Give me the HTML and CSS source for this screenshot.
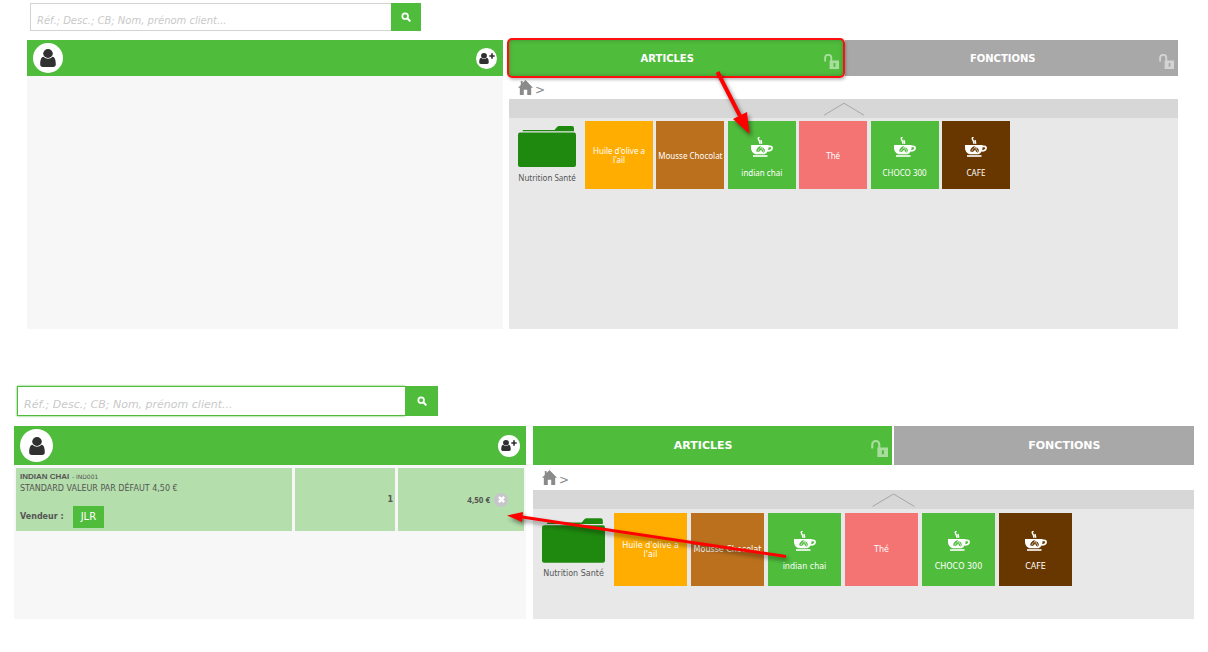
FILE: index.html
```html
<!DOCTYPE html>
<html lang="fr">
<head>
<meta charset="utf-8">
<meta name="viewport" content="width=device-width, initial-scale=1">
<title>Caisse</title>
<link rel="stylesheet" href="styles.css">
</head>
<body>
<svg class="sprite" aria-hidden="true">
  <symbol id="search" viewBox="0 0 12 12"><circle cx="5" cy="5" r="3.4" fill="none" stroke="currentColor" stroke-width="2"/><path d="M7.5 7.5 10.5 10.5" stroke="currentColor" stroke-width="2.4" stroke-linecap="round"/></symbol>
  <symbol id="user" viewBox="0 0 16 18"><ellipse cx="8" cy="4.500" rx="4.800" ry="4.400" fill="currentColor"/><path d="M3.400 7.800C1 8.300.2 11.500.2 15.200c0 1.800 1 2.800 2.600 2.800h10.400c1.600 0 2.600-1 2.600-2.800 0-3.700-.8-6.900-3.200-7.400C10 10.400 6 10.400 3.400 7.800z" fill="currentColor"/></symbol>
  <symbol id="plus" viewBox="0 0 6 6"><path d="M3 .3v5.400M.3 3h5.400" stroke="currentColor" stroke-width="1.600"/></symbol>
  <symbol id="lock" viewBox="0 0 16 16"><path d="M1.200 8V4.200a3.300 3.300 0 0 1 6.600 0V7.500" fill="none" stroke="currentColor" stroke-width="2"/><path fill-rule="evenodd" d="M6 7h10v9H6zM10.200 9.700v3.800h2V9.700z" fill="currentColor"/></symbol>
  <symbol id="home" viewBox="0 0 14 14"><path d="M7 0 14 7.300H12.300V14H8.600V9H5.400v5H1.700V7.300H0L2.600 4.600V1h1.700v1.800z" fill="currentColor"/></symbol>
  <symbol id="chevron" viewBox="0 0 44 14"><path d="M1 13.500 22 1 43 13.500" fill="none" stroke="currentColor" stroke-width="1"/></symbol>
  <symbol id="folder" viewBox="0 0 58 41"><path d="M5 4h31.500L39 1Q40 0 41 0h13q2 0 2 2v3.300H4.500z" fill="currentColor"/><rect y="6.500" width="58" height="34.500" rx="2" fill="currentColor"/></symbol>
  <symbol id="cup" viewBox="0 0 22 20"><path d="M8.500 0c-3.400 2 1.200 3.200.2 6.800M10.300 3c-.8 1.400.8 2 .1 3.800" fill="none" stroke="#fff" stroke-width="1.500"/><path d="M0 8h17.500v3c0 3-1.600 5-4 6.200h-9C1.600 16 0 14 0 11z" fill="#fff"/><path d="M16.500 9.300h2.600q2 0 2 1.700c0 1.700-2 2.800-4.700 3" fill="none" stroke="#fff" stroke-width="1.700"/><path d="M2 19h14.500" stroke="#fff" stroke-width="1.600"/><g fill="var(--tile)"><ellipse cx="8" cy="12.200" rx="3.300" ry="1.900" transform="rotate(-48 8 12.200)"/><ellipse cx="12" cy="13" rx="1.600" ry="2.500" transform="rotate(-28 12 13)"/></g><path d="M6.300 14.500c1-2 2.400-2 3.600-4.500M11 10.800c.3 1.800 1.600 2.200 2 4.200" fill="none" stroke="#fff" stroke-width=".7"/></symbol>
  <symbol id="cross" viewBox="0 0 8 8"><path d="M1 1l6 6M7 1 1 7" stroke="currentColor" stroke-width="2.800"/></symbol>
</svg>

<main class="page">
  <section class="screen first">
    <form class="search">
      <input class="search-input" type="text" aria-label="Recherche" placeholder="Réf.; Desc.; CB; Nom, prénom client...">
      <button class="search-button" type="button" aria-label="Rechercher"><svg><use href="#search"/></svg></button>
    </form>
    <div class="panels">
      <section class="ticket">
        <header class="ticket-head">
          <button class="client" type="button" aria-label="Client"><svg><use href="#user"/></svg></button>
          <button class="add" type="button" aria-label="Ajouter un client"><svg class="person"><use href="#user"/></svg><svg class="plus"><use href="#plus"/></svg></button>
        </header>
      </section>
      <section class="catalog">
        <div class="catalog-inner">
          <nav class="tabs">
            <button class="tab active framed" type="button"><span class="tab-label">ARTICLES</span><svg class="lock"><use href="#lock"/></svg></button>
            <button class="tab" type="button"><span class="tab-label">FONCTIONS</span><svg class="lock"><use href="#lock"/></svg></button>
          </nav>
          <div class="crumbs"><a class="home" href="#" aria-label="Accueil"><svg><use href="#home"/></svg></a><span>&gt;</span></div>
          <button class="scroll-up" type="button" aria-label="Monter"><svg><use href="#chevron"/></svg></button>
          <div class="items">
            <button class="folder" type="button"><svg><use href="#folder"/></svg><span>Nutrition Santé</span></button>
            <div class="tiles">
              <button class="tile orange" type="button">Huile d'olive a l'ail</button>
              <button class="tile caramel" type="button">Mousse Chocolat</button>
              <button class="tile green drink" type="button"><svg><use href="#cup"/></svg><span>indian chai</span></button>
              <button class="tile pink" type="button">Thé</button>
              <button class="tile green drink" type="button"><svg><use href="#cup"/></svg><span>CHOCO 300</span></button>
              <button class="tile brown drink" type="button"><svg><use href="#cup"/></svg><span>CAFE</span></button>
            </div>
          </div>
        </div>
      </section>
    </div>
  </section>

  <section class="screen second">
    <form class="search">
      <input class="search-input" type="text" aria-label="Recherche" placeholder="Réf.; Desc.; CB; Nom, prénom client...">
      <button class="search-button" type="button" aria-label="Rechercher"><svg><use href="#search"/></svg></button>
    </form>
    <div class="panels">
      <section class="ticket">
        <header class="ticket-head">
          <button class="client" type="button" aria-label="Client"><svg><use href="#user"/></svg></button>
          <button class="add" type="button" aria-label="Ajouter un client"><svg class="person"><use href="#user"/></svg><svg class="plus"><use href="#plus"/></svg></button>
        </header>
        <div class="line">
          <div class="cell">
            <div class="product"><b>INDIAN CHAI</b> <small>- IND001</small></div>
            <div class="option">STANDARD VALEUR PAR DÉFAUT 4,50 €</div>
            <div class="seller"><b>Vendeur :</b><button class="seller-name" type="button">JLR</button></div>
          </div>
          <div class="cell quantity">1</div>
          <div class="cell price">4,50 €<button class="remove" type="button" aria-label="Supprimer"><svg><use href="#cross"/></svg></button></div>
        </div>
      </section>
      <section class="catalog">
        <div class="catalog-inner">
          <nav class="tabs">
            <button class="tab active" type="button"><span class="tab-label">ARTICLES</span><svg class="lock"><use href="#lock"/></svg></button>
            <button class="tab" type="button"><span class="tab-label">FONCTIONS</span><svg class="lock"><use href="#lock"/></svg></button>
          </nav>
          <div class="crumbs"><a class="home" href="#" aria-label="Accueil"><svg><use href="#home"/></svg></a><span>&gt;</span></div>
          <button class="scroll-up" type="button" aria-label="Monter"><svg><use href="#chevron"/></svg></button>
          <div class="items">
            <button class="folder" type="button"><svg><use href="#folder"/></svg><span>Nutrition Santé</span></button>
            <div class="tiles">
              <button class="tile orange" type="button">Huile d'olive a l'ail</button>
              <button class="tile caramel" type="button">Mousse Chocolat</button>
              <button class="tile green drink" type="button"><svg><use href="#cup"/></svg><span>indian chai</span></button>
              <button class="tile pink" type="button">Thé</button>
              <button class="tile green drink" type="button"><svg><use href="#cup"/></svg><span>CHOCO 300</span></button>
              <button class="tile brown drink" type="button"><svg><use href="#cup"/></svg><span>CAFE</span></button>
            </div>
          </div>
        </div>
      </section>
    </div>
  </section>

  <svg class="arrows" viewBox="0 0 1208 652" preserveAspectRatio="none" aria-hidden="true">
    <path d="M717.500 72 740 116" stroke="#f00" stroke-width="4"/>
    <path d="M749.500 134 733 119 747 112z" fill="#f00"/>
    <path d="M522 517 786 556.500" stroke="#f00" stroke-width="3"/>
    <path d="M507 515.500 523 512 522 522z" fill="#f00"/>
  </svg>
</main>
</body>
</html>
```
FILE: styles.css
```css
* { box-sizing: border-box; }

body {
  margin: 0;
  background: #fff;
  color: #555;
  font-family: Verdana, "DejaVu Sans", sans-serif;
}

button {
  margin: 0;
  padding: 0;
  border: 0;
  background: none;
  color: inherit;
  font: inherit;
  cursor: pointer;
}

svg { display: block; }
.sprite { display: none; }

.page {
  position: relative;
  min-height: 652px;
  overflow: hidden;
}

.arrows {
  position: absolute;
  inset: 0;
  z-index: 2;
  width: 100%;
  height: 100%;
  pointer-events: none;
  filter: drop-shadow(2px 3px 2px rgba(0, 0, 0, .45));
}

.first {
  --search-w: 391px;
  --search-h: 28px;
  --button-w: 30px;
  --placeholder: 10px;
  --head: 36px;
  --client: 30px;
  --add: 21px;
  --crumbs: 23px;
  --bar: 19px;
  --tab-text: 10px;
  --tile-size: 68px;
  --tiles-w: 425px;
  --folder-w: 58px;
  --folder-h: 41px;
  --items-pad: 3px 9px;
  --cup: 22px;
  --chevron: 42px;
  --edge: #d3d3d3;
  --tile-font: "Noto Sans", sans-serif;
  --lock: 15px;
  padding: 3px 30px 0 27px;
}

.second {
  --search-w: 421px;
  --search-h: 30px;
  --button-w: 33px;
  --placeholder: 11px;
  --head: 39px;
  --client: 33px;
  --add: 22px;
  --crumbs: 25px;
  --bar: 19px;
  --tab-text: 11px;
  --tile-size: 73px;
  --tiles-w: 458px;
  --folder-w: 63px;
  --folder-h: 45px;
  --items-pad: 4px 9px;
  --cup: 24px;
  --chevron: 45px;
  --edge: #50bc3c;
  --tile-font: Verdana, "DejaVu Sans", sans-serif;
  --lock: 17px;
  padding: 57px 14px 0;
}

.search {
  display: flex;
  width: var(--search-w);
  height: var(--search-h);
  margin: 0 3px;
}

.search-input {
  flex: 1;
  min-width: 0;
  padding: 6px 6px 0;
  border: 1px solid var(--edge);
  border-right: 0;
  border-radius: 0;
  outline: 0;
  background: #fff;
  font: italic var(--placeholder) Verdana, "DejaVu Sans", sans-serif;
}

.search-input::placeholder { color: #c9c9c9; opacity: 1; }
.second .search-input { box-shadow: 0 0 2px #50bc3c; }

.search-button {
  display: grid;
  place-items: center;
  width: var(--button-w);
  background: #50bc3c;
  color: #fff;
}

.search-button svg { width: 10px; height: 10px; }

.panels { display: grid; }

.first .panels {
  grid-template-columns: 476fr 669fr;
  gap: 6px;
  min-height: 289px;
  margin-top: 9px;
}

.second .panels {
  grid-template-columns: 512fr 661fr;
  gap: 7px;
  min-height: 193px;
  margin-top: 10px;
}

.ticket { background: #f7f7f7; }

.ticket-head {
  display: flex;
  align-items: center;
  justify-content: space-between;
  height: var(--head);
  padding: 0 6px;
  background: #50bc3c;
}

.client, .add {
  display: flex;
  align-items: center;
  justify-content: center;
  border-radius: 50%;
  background: #fff;
  color: #303030;
}

.client { width: var(--client); height: var(--client); }
.client svg { width: 16px; height: 18px; }
.second .client svg { height: 20px; }
.add { width: var(--add); height: var(--add); }
.add .person { width: 10px; height: 11px; }
.add .plus { width: 6px; height: 6px; margin-bottom: 5px; }

.catalog { min-width: 0; }
.second .catalog { overflow: hidden; }
.catalog-inner { display: flex; flex-direction: column; height: 100%; }
.second .catalog-inner { width: 109%; }

.tabs { display: grid; grid-template-columns: 1fr 1fr; gap: 2px; }

.tab {
  position: relative;
  display: flex;
  align-items: center;
  height: var(--head);
  padding: 0 4px 0 2px;
  background: #a8a8a8;
  color: #fff;
  font-size: var(--tab-text);
  font-weight: bold;
}

.tab.active { z-index: 1; background: #50bc3c; }
.tab-label { flex: 1; text-align: center; }

.lock {
  width: var(--lock);
  height: var(--lock);
  margin-top: 6px;
  opacity: .5;
}

.framed::after {
  content: "";
  position: absolute;
  inset: -2px;
  border: 2px solid #ff1010;
  border-radius: 5px;
  box-shadow: 1px 2px 3px rgba(0, 0, 0, .25), inset 0 0 4px rgba(0, 0, 0, .25);
}

.crumbs {
  display: flex;
  align-items: center;
  gap: 2px;
  height: var(--crumbs);
  padding-left: 9px;
  color: #8a8a8a;
  font-size: 12px;
}

.crumbs span { padding-top: 4px; }
.home { color: inherit; }
.home svg { width: 15px; height: 15px; }

.scroll-up {
  display: grid;
  place-items: center;
  height: var(--bar);
  background: #d7d7d7;
  color: #a5a5a5;
}

.scroll-up svg { width: var(--chevron); height: 14px; }

.items {
  flex: 1;
  display: flex;
  align-items: flex-start;
  gap: 9px;
  padding: var(--items-pad);
  background: #e8e8e8;
  font: 8px/9px var(--tile-font);
}

.folder {
  display: flex;
  flex-direction: column;
  align-items: center;
  gap: 6px;
  width: var(--folder-w);
  padding-top: 5px;
  color: #1f890f;
  white-space: nowrap;
}

.folder svg { width: var(--folder-w); height: var(--folder-h); }
.folder span { color: #555; }

.tiles {
  display: grid;
  grid-template-columns: repeat(6, var(--tile-size));
  justify-content: space-between;
  width: var(--tiles-w);
}

.tile {
  display: flex;
  align-items: center;
  justify-content: center;
  height: var(--tile-size);
  background: var(--tile);
  color: #fff;
}

.drink { flex-direction: column; gap: 11px; padding-top: 3px; }
.drink svg { width: var(--cup); height: 20px; }
.orange { --tile: #ffad00; padding: 0 6px; }
.caramel { --tile: #bb701d; }
.green { --tile: #50bc3c; }
.pink { --tile: #f47373; }
.brown { --tile: #683700; }

.line {
  display: grid;
  grid-template-columns: 276fr 100fr 126fr;
  gap: 3px;
  padding: 3px 2px 0;
  font-size: 8px;
}

.cell {
  min-height: 63px;
  padding: 3px 4px;
  background: #b4deab;
  line-height: 12px;
}

.product b { font-family: Arial, "Liberation Sans", sans-serif; }
.product small { font-size: 6px; }

.seller {
  display: flex;
  align-items: center;
  gap: 9px;
  margin-top: 11px;
}

.seller-name {
  height: 22px;
  padding: 0 8px;
  background: #50bc3c;
  color: #fff;
  font-size: 10px;
}

.quantity, .price {
  display: flex;
  align-items: center;
  justify-content: flex-end;
  gap: 4px;
  padding-right: 2px;
  font-weight: bold;
}

.price {
  padding-right: 16px;
  font-family: "Open Sans", sans-serif;
}

.remove {
  display: grid;
  place-items: center;
  width: 14px;
  height: 14px;
  border-radius: 50%;
  background: #c5c5cb;
  color: #fff;
}

.remove svg { width: 7px; height: 7px; }
```
